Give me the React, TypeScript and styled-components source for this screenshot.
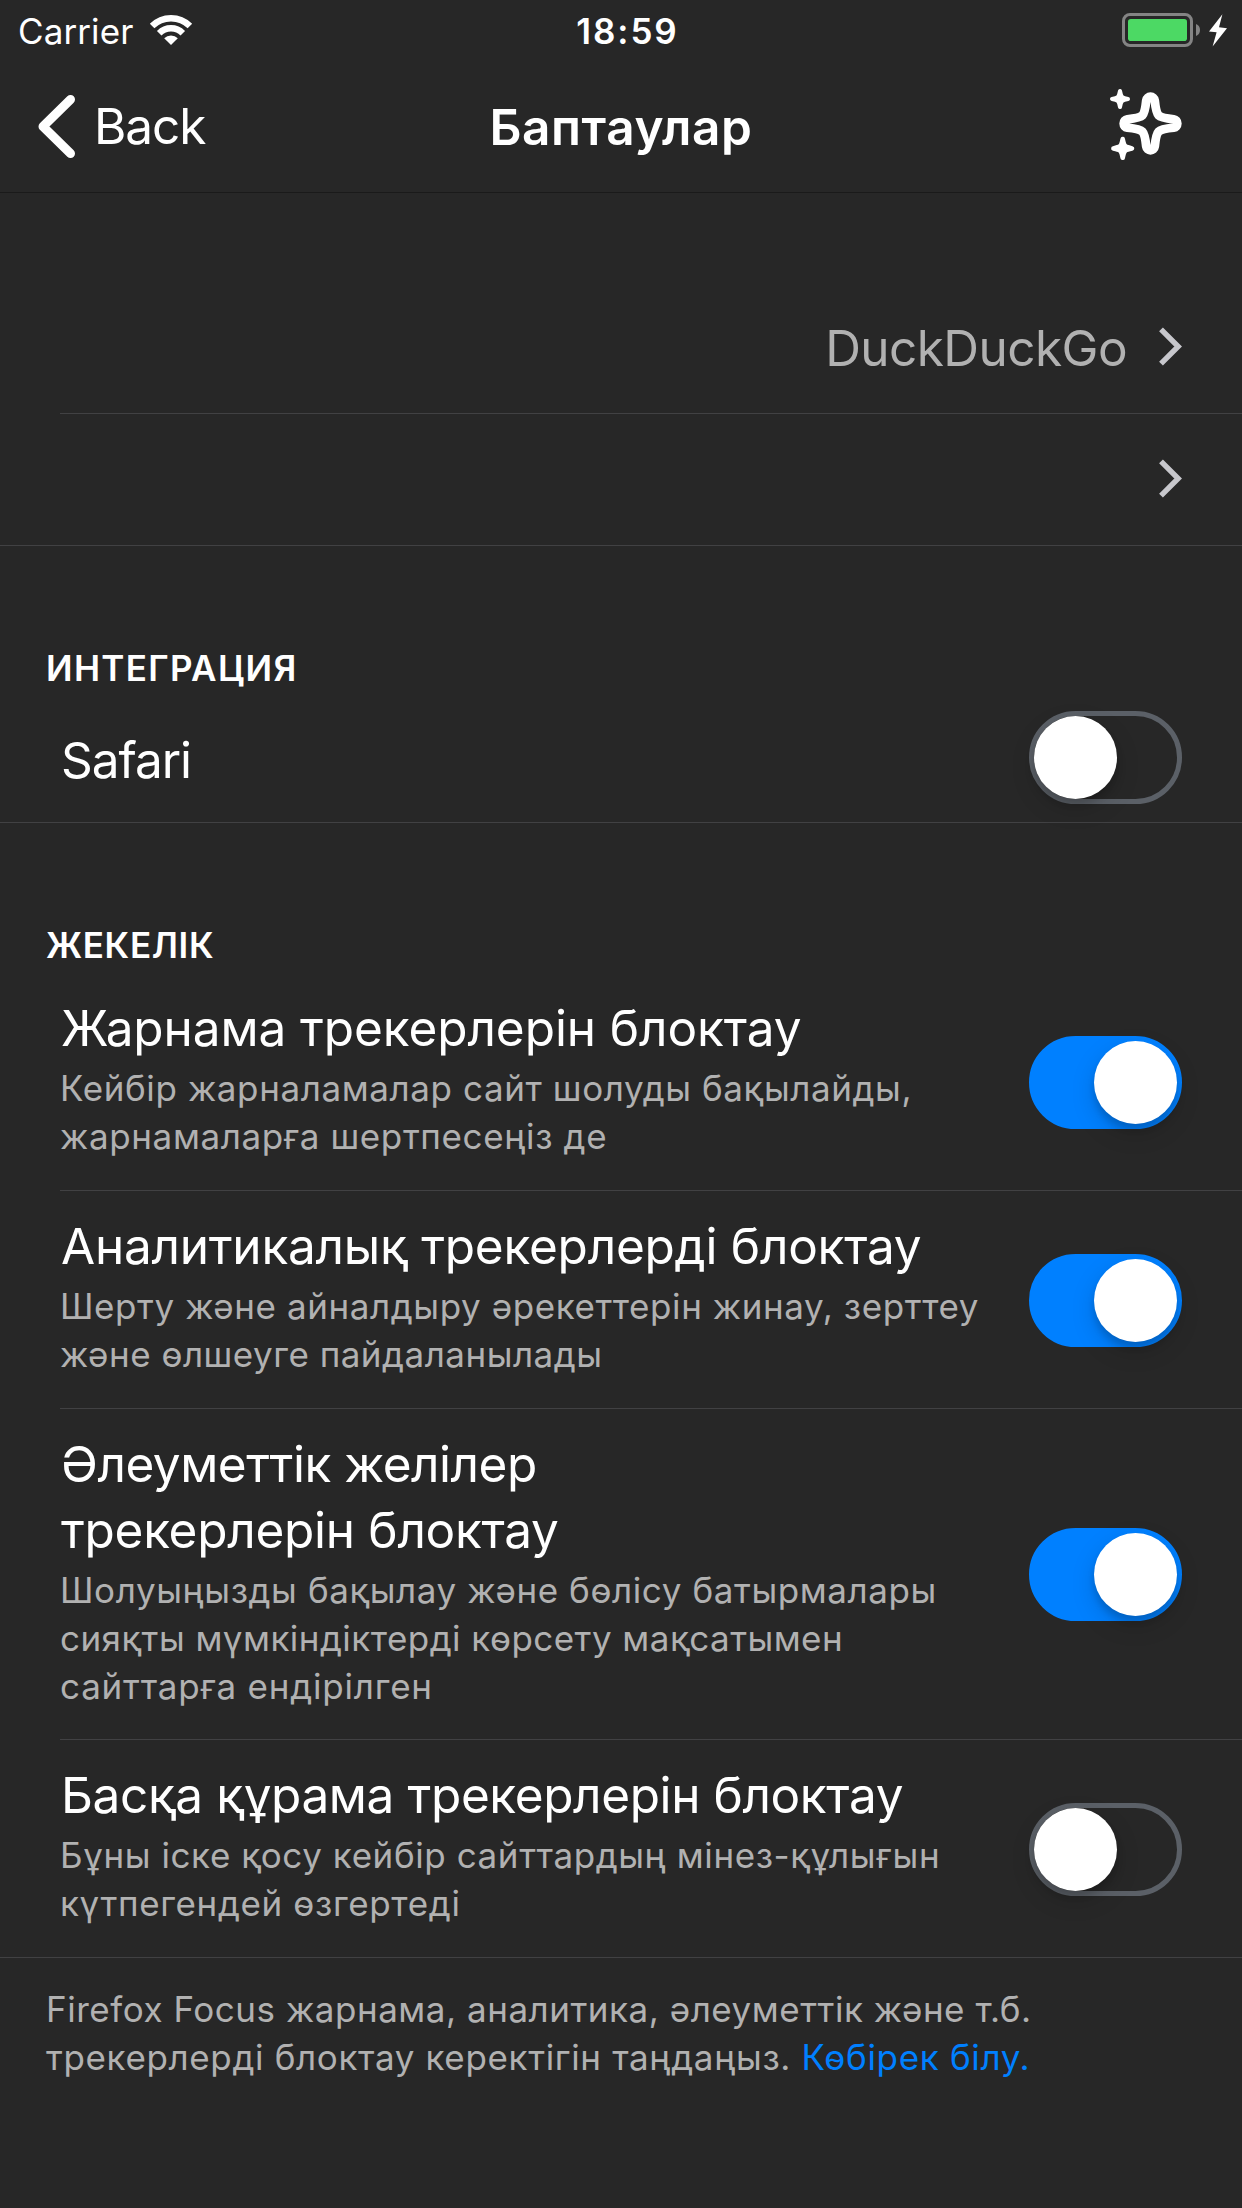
import React, { useState } from "react";
import styled, { createGlobalStyle } from "styled-components";

const GlobalStyle = createGlobalStyle`
  *, *::before, *::after { box-sizing: border-box; }
  body { margin: 0; background: #272727; }
`;

const Screen = styled.main`
  display: flex;
  flex-direction: column;
  width: 1242px;
  height: 2208px;
  overflow: hidden;
  background: #272727;
  color: #fff;
  font-family: Inter, "Noto Sans", sans-serif;
`;

const StatusBar = styled.header`
  display: grid;
  grid-template-columns: 1fr auto 1fr;
  height: 60px;
  padding: 2px 14px 0 18px;
  font-size: 35px;
  line-height: 58px;
`;

const Carrier = styled.div`
  display: flex;
  gap: 16px;
  letter-spacing: 0.1px;

  svg { margin-top: 13px; }
`;

const Clock = styled.time`
  padding-left: 9px;
  font-weight: 600;
  letter-spacing: 1.9px;
`;

const Power = styled.div`
  display: flex;
  justify-content: flex-end;
  padding-top: 11px;
`;

const NavBar = styled.nav`
  display: grid;
  grid-template-columns: 1fr auto 1fr;
  height: 133px;
  padding: 29px 57px 0 35px;
  border-bottom: 1px solid #1a1a1a;
  font-size: 49.5px;
  line-height: 66px;
`;

const BackButton = styled.button`
  display: flex;
  align-items: flex-start;
  gap: 15px;
  padding: 0;
  border: 0;
  background: none;
  color: inherit;
  font: inherit;
  letter-spacing: -1.1px;

  svg { margin-top: 3px; }
  span { margin-top: 4px; }
`;

const NavTitle = styled.h1`
  margin: 5px 0 0;
  padding-left: 22px;
  font-size: inherit;
  font-weight: 600;
  letter-spacing: 0.61px;
`;

const NavAction = styled.button`
  justify-self: end;
  align-self: start;
  display: flex;
  margin: -2px 0 0;
  padding: 0;
  border: 0;
  background: none;
  color: inherit;
`;

const Group = styled.section<{ $top?: number }>`
  padding-top: ${(p) => p.$top ?? 0}px;
`;

const GroupHeader = styled.h2<{ $height: number; $spacing: number }>`
  height: ${(p) => p.$height}px;
  margin: 0;
  padding: 98px 0 0 46px;
  font-size: 35px;
  font-weight: 600;
  line-height: 48px;
  letter-spacing: ${(p) => p.$spacing}px;
`;

const Row = styled.div<{ $inset?: boolean; $height: number }>`
  display: flex;
  justify-content: space-between;
  height: ${(p) => p.$height}px;
  margin-left: ${(p) => (p.$inset ? 60 : 0)}px;
  padding: 0 60px 0 ${(p) => (p.$inset ? 0 : 60)}px;
  border-bottom: 1px solid #414143;
`;

const Disclosure = styled.div`
  display: flex;
  gap: 32px;
  margin-left: auto;

  svg { margin-top: 45px; }
`;

const Value = styled.span`
  padding-top: 33px;
  color: #b1b1b1;
  font-size: 49.5px;
  line-height: 66px;
  letter-spacing: -0.57px;
`;

const Copy = styled.div<{ $top?: number }>`
  padding-top: ${(p) => p.$top ?? 22}px;
`;

const TitleLine = styled.div<{ $spacing: number }>`
  padding-left: 1px;
  font-size: 49.5px;
  line-height: 66px;
  white-space: nowrap;
  letter-spacing: ${(p) => p.$spacing}px;
`;

const Details = styled.div`
  margin-top: 3px;
`;

const DetailLine = styled.div<{ $spacing: number }>`
  color: #b1b1b1;
  font-size: 35px;
  line-height: 48px;
  white-space: nowrap;
  letter-spacing: ${(p) => p.$spacing}px;
`;

const Footer = styled.footer`
  padding: 27px 0 0 46px;
`;

const Link = styled.a`
  color: #0080ff;
  text-decoration: none;
  letter-spacing: 0.67px;
`;

const Track = styled.button<{ $on: boolean; $top: number }>`
  display: flex;
  flex: none;
  justify-content: ${(p) => (p.$on ? "flex-end" : "flex-start")};
  width: 153px;
  height: 93px;
  margin-top: ${(p) => p.$top}px;
  padding: 0;
  border: 5px solid ${(p) => (p.$on ? "#0080ff" : "#5b6067")};
  border-radius: 47px;
  background: ${(p) => (p.$on ? "#0080ff" : "transparent")};
`;

const Knob = styled.span`
  width: 83px;
  height: 83px;
  border-radius: 50%;
  background: #fff;
  box-shadow: 0 9px 24px rgba(0, 0, 0, 0.15), 0 6px 7px rgba(0, 0, 0, 0.14);
`;

function Switch({ initial, top }: { initial: boolean; top: number }) {
  const [on, setOn] = useState(initial);
  return (
    <Track type="button" role="switch" aria-checked={on} $on={on} $top={top} onClick={() => setOn(!on)}>
      <Knob />
    </Track>
  );
}

const WifiIcon = () => (
  <svg width="44" height="31" viewBox="-22 -30 44 31" fill="none" stroke="#fff" strokeWidth="6.4">
    <path d="M-18.9-18.9A26.75 26.75 0 0 1 18.9-18.9" />
    <path d="M-11.8-11.8A16.7 16.7 0 0 1 11.8-11.8" />
    <path d="M0 0L-6.8-6.8A9.6 9.6 0 0 1 6.8-6.8Z" fill="#fff" stroke="none" />
  </svg>
);

const BatteryIcon = () => (
  <svg width="106" height="35" viewBox="0 0 106 35">
    <rect x="1.5" y="1.5" width="68" height="31" rx="6.5" fill="none" stroke="#848484" strokeWidth="3" />
    <rect x="6" y="6" width="59" height="22" rx="2.8" fill="#4cd964" />
    <path d="M74 11C76.7 12 78 14.3 78 17S76.7 22 74 23Z" fill="#848484" />
    <path d="M100.4 1.3L87 18.4L94.6 19.3L90.6 33.5L105 15.2L97 14.2Z" fill="#fff" />
  </svg>
);

const BackIcon = () => (
  <svg width="44" height="68" viewBox="0 0 44 68" fill="none" stroke="#fff" strokeWidth="9" strokeLinecap="round" strokeLinejoin="round">
    <path d="M35.5 7.5L8 34.5L35.5 61.5" />
  </svg>
);

const SparkleIcon = () => (
  <svg width="76" height="76" viewBox="1109 87 76 76" fill="none" stroke="#fff" strokeLinejoin="round">
    <path
      transform="translate(1150.5 123.5)"
      strokeWidth="8.8"
      d="M-4.2-23.2A4.25 4.25 0 0 1 4.2-23.2C5.2-14 6-10.2 8.1-8.1C10.2-6 14-5.2 23.2-4.2A4.25 4.25 0 0 1 23.2 4.2C14 5.2 10.2 6 8.1 8.1C6 10.2 5.2 14 4.2 23.2A4.25 4.25 0 0 1-4.2 23.2C-5.2 14-6 10.2-8.1 8.1C-10.2 6-14 5.2-23.2 4.2A4.25 4.25 0 0 1-23.2-4.2C-14-5.2-10.2-6-8.1-8.1C-6-10.2-5.2-14-4.2-23.2Z"
    />
    <path
      transform="translate(1120 99)"
      fill="#fff"
      strokeWidth="4"
      d="M0-8C.8-4 1.2-3 2.1-2.1S4-.8 8 0C4 .8 3 1.2 2.1 2.1S.8 4 0 8C-.8 4-1.2 3-2.1 2.1S-4 .8-8 0C-4-.8-3-1.2-2.1-2.1S-.8-4 0-8Z"
    />
    <path
      transform="translate(1122.7 148.4) scale(1.16)"
      fill="#fff"
      strokeWidth="4"
      d="M0-8C.8-4 1.2-3 2.1-2.1S4-.8 8 0C4 .8 3 1.2 2.1 2.1S.8 4 0 8C-.8 4-1.2 3-2.1 2.1S-4 .8-8 0C-4-.8-3-1.2-2.1-2.1S-.8-4 0-8Z"
    />
  </svg>
);

const ChevronIcon = () => (
  <svg width="23" height="39" viewBox="0 0 23 39" fill="none" stroke="#c7c7cc" strokeWidth="5.4">
    <path d="M2 2.3L19.2 19.5L2 36.7" />
  </svg>
);

type Line = [text: string, spacing: number];

interface Tracker {
  title: Line[];
  details: Line[];
  on: boolean;
  height: number;
  switchTop: number;
}

const trackers: Tracker[] = [
  {
    title: [["Жарнама трекерлерін блоктау", -0.08]],
    details: [
      ["Кейбір жарналамалар сайт шолуды бақылайды,", 0.6],
      ["жарнамаларға шертпесеңіз де", 0.62],
    ],
    on: true,
    height: 218,
    switchTop: 63,
  },
  {
    title: [["Аналитикалық трекерлерді блоктау", -0.24]],
    details: [
      ["Шерту және айналдыру әрекеттерін жинау, зерттеу", 0.58],
      ["және өлшеуге пайдаланылады", 0.5],
    ],
    on: true,
    height: 218,
    switchTop: 63,
  },
  {
    title: [
      ["Әлеуметтік желілер", -0.48],
      ["трекерлерін блоктау", -0.28],
    ],
    details: [
      ["Шолуыңызды бақылау және бөлісу батырмалары", 0.59],
      ["сияқты мүмкіндіктерді көрсету мақсатымен", 0.46],
      ["сайттарға ендірілген", 0.79],
    ],
    on: true,
    height: 331,
    switchTop: 119,
  },
  {
    title: [["Басқа құрама трекерлерін блоктау", -0.39]],
    details: [
      ["Бұны іске қосу кейбір сайттардың мінез-құлығын", 0.58],
      ["күтпегендей өзгертеді", 0.64],
    ],
    on: false,
    height: 218,
    switchTop: 63,
  },
];

export default function App() {
  return (
    <Screen>
      <GlobalStyle />
      <StatusBar>
        <Carrier>
          Carrier
          <WifiIcon />
        </Carrier>
        <Clock>18:59</Clock>
        <Power>
          <BatteryIcon />
        </Power>
      </StatusBar>

      <NavBar>
        <BackButton type="button">
          <BackIcon />
          <span>Back</span>
        </BackButton>
        <NavTitle>Баптаулар</NavTitle>
        <NavAction type="button">
          <SparkleIcon />
        </NavAction>
      </NavBar>

      <Group $top={89}>
        <Row $inset $height={132}>
          <Disclosure>
            <Value>DuckDuckGo</Value>
            <ChevronIcon />
          </Disclosure>
        </Row>
        <Row $height={132}>
          <Disclosure>
            <ChevronIcon />
          </Disclosure>
        </Row>
      </Group>

      <Group>
        <GroupHeader $height={145} $spacing={1.34}>ИНТЕГРАЦИЯ</GroupHeader>
        <Row $height={132}>
          <Copy $top={36}>
            <TitleLine $spacing={-1.05}>Safari</TitleLine>
          </Copy>
          <Switch initial={false} top={20} />
        </Row>
      </Group>

      <Group>
        <GroupHeader $height={150} $spacing={0.65}>ЖЕКЕЛІК</GroupHeader>
        {trackers.map((tracker, i) => (
          <Row key={tracker.title[0][0]} $inset={i < trackers.length - 1} $height={tracker.height}>
            <Copy>
              {tracker.title.map(([text, spacing]) => (
                <TitleLine key={text} $spacing={spacing}>{text}</TitleLine>
              ))}
              <Details>
                {tracker.details.map(([text, spacing]) => (
                  <DetailLine key={text} $spacing={spacing}>{text}</DetailLine>
                ))}
              </Details>
            </Copy>
            <Switch initial={tracker.on} top={tracker.switchTop} />
          </Row>
        ))}
      </Group>

      <Footer>
        <DetailLine $spacing={0.53}>Firefox Focus жарнама, аналитика, әлеуметтік және т.б.</DetailLine>
        <DetailLine $spacing={0.64}>
          трекерлерді блоктау керектігін таңдаңыз. <Link>Көбірек білу.</Link>
        </DetailLine>
      </Footer>
    </Screen>
  );
}
